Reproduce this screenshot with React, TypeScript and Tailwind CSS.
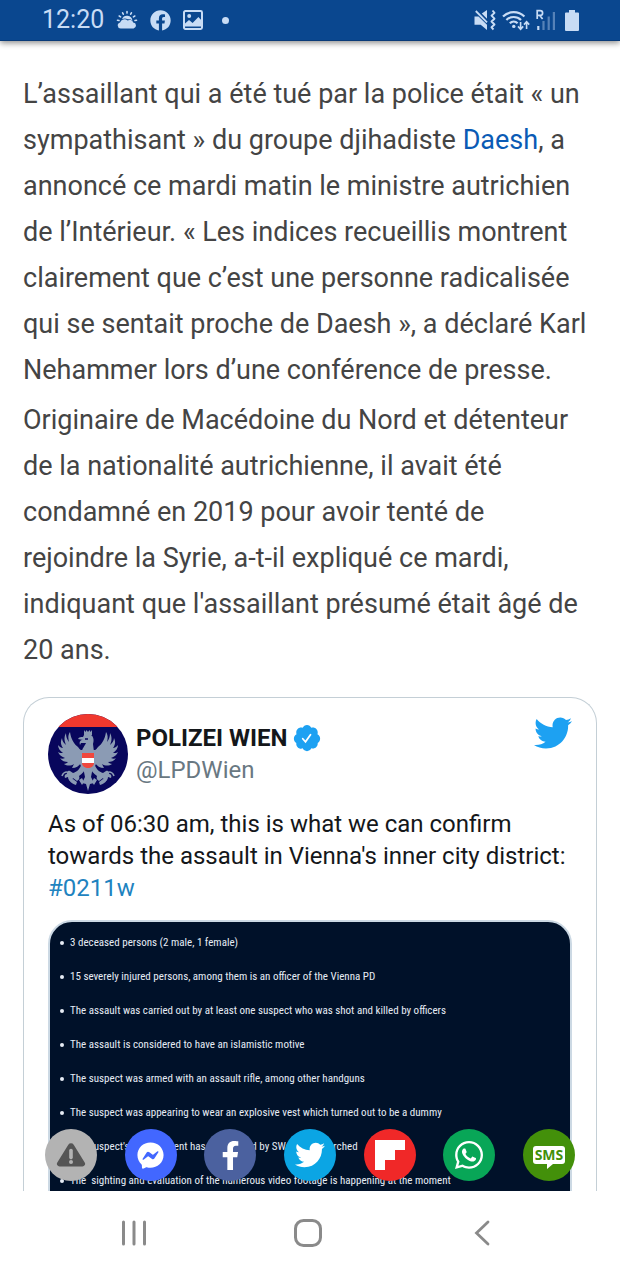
import React from 'react';
import { FaFacebook, FaFacebookF, FaFacebookMessenger, FaTwitter, FaWhatsapp } from 'react-icons/fa';

interface IShareLink {
    name: string;
    className: string;
    icon: React.ReactNode;
}

const facts: string[] = [
    "3 deceased persons (2 male, 1 female)",
    "15 severely injured persons, among them is an officer of the Vienna PD",
    "The assault was carried out by at least one suspect who was shot and killed by officers",
    "The assault is considered to have an islamistic motive",
    "The suspect was armed with an assault rifle, among other handguns",
    "The suspect was appearing to wear an explosive vest which turned out to be a dummy",
    "The suspect's appartement has been found by SWAT and searched",
    "The \u00a0sighting and evaluation of the numerous video footage is happening at the moment",
];

const shareLinks: IShareLink[] = [
    {
        name: "Signaler",
        className: "bg-[#b3b3b3]",
        icon: (
            <svg width="30" height="24" viewBox="0 0 30 24">
                <path d="M12.3 1.8a3.2 3.2 0 0 1 5.4 0l11 17.6a2.6 2.6 0 0 1-2.2 4H3.5a2.6 2.6 0 0 1-2.2-4z" fill="#555" />
                <path d="M15 7.6v7" stroke="#b3b3b3" strokeWidth="3.6" strokeLinecap="round" />
                <circle cx="15" cy="19" r="2" fill="#b3b3b3" />
            </svg>
        ),
    },
    { name: "Messenger", className: "bg-[#4267ff]", icon: <FaFacebookMessenger size={27} /> },
    { name: "Facebook", className: "bg-[#4b619f]", icon: <FaFacebookF size={29} /> },
    { name: "Twitter", className: "bg-[#0ba5e4]", icon: <FaTwitter size={30} /> },
    {
        name: "Flipboard",
        className: "bg-[#f02828]",
        icon: (
            <svg width="30" height="30" viewBox="0 0 30 30" fill="currentColor">
                <path d="M0 0h30v10H20v10H10v10H0z" />
            </svg>
        ),
    },
    { name: "WhatsApp", className: "bg-[#08a657]", icon: <FaWhatsapp size={32} /> },
];

function WeatherIcon() {
    return (
        <svg width="22" height="20" viewBox="0 0 22 20" fill="currentColor">
            <path d="M4.6 18.5a3.1 3.1 0 0 1-.5-6.1 4.6 4.6 0 0 1 7.4-1.9 3.9 3.9 0 0 1 5.7 1.9 3.1 3.1 0 0 1 .4 6.1z" />
            <path d="M6 9.3a5.4 5.4 0 0 1 10.4 1.2 5.6 5.6 0 0 0-4.6-1.2A5.6 5.6 0 0 0 6 9.3z" />
            <path
                d="M11 1.5v1.6M6.6 2.8l.7 1.4M15.4 2.8l-.7 1.4M3.2 6l1.4.9M18.8 6l-1.4.9M1.5 10.2l1.5.3M20.5 10.2l-1.5.3"
                stroke="currentColor"
                strokeWidth="1.6"
                strokeLinecap="round"
            />
        </svg>
    );
}

function PictureIcon() {
    return (
        <svg width="20" height="20" viewBox="0 0 20 20">
            <rect x="1" y="1" width="18" height="18" rx="1.4" fill="none" stroke="currentColor" strokeWidth="2" />
            <circle cx="6.2" cy="6" r="2" fill="currentColor" />
            <path d="M2 16.5v-3l4-3.6 3.6 3L15.4 7l3.2 3.4v6.1z" fill="currentColor" />
        </svg>
    );
}

function MuteIcon() {
    return (
        <svg width="22" height="22" viewBox="0 0 22 22">
            <path d="M.5 7.5h4L13 15.8V21l-6.3-5.2H.5zM7.8 4.6 13 1v8.8z" fill="currentColor" />
            <path d="M1.8 2 13 13.4" stroke="currentColor" strokeWidth="1.8" />
            <path d="m18.5 1.5 2 2.4-3 2.8 3 3-3 2.8 3 3-3 2.8 2 2.2" fill="none" stroke="currentColor" strokeWidth="1.9" strokeLinejoin="round" />
        </svg>
    );
}

function WifiIcon() {
    return (
        <svg width="28" height="22" viewBox="0 0 28 22" fill="none" stroke="currentColor" strokeWidth="2.2">
            <path d="M1 7.6a15 15 0 0 1 21.4 0" />
            <path d="M4.4 11a10.4 10.4 0 0 1 14.6 0" />
            <path d="M7.8 14.2a5.6 5.6 0 0 1 7.8 0" />
            <circle cx="11.8" cy="17.4" r="1.7" fill="currentColor" stroke="none" />
            <path d="M18.6 13v7M16 17.4l2.6 2.8 2.6-2.8M24.6 20v-7M22 15.6l2.6-2.8 2.6 2.8" strokeWidth="1.6" />
        </svg>
    );
}

function SignalIcon() {
    return (
        <svg width="20" height="22" viewBox="0 0 20 22" fill="currentColor">
            <path d="M1.2 10V1.6h3a2.3 2.3 0 0 1 0 4.8h-3M3.8 6.4 6.6 10" fill="none" stroke="currentColor" strokeWidth="1.7" />
            <path d="M1.2 17h2.2v4H1.2z" />
            <path d="M6.4 12h2.2v9H6.4zM11.6 7.6h2.2V21h-2.2zM16.8 3H19v18h-2.2z" opacity="0.4" />
        </svg>
    );
}

function BatteryIcon() {
    return (
        <svg width="14" height="21" viewBox="0 0 14 21" fill="currentColor">
            <path d="M4 0h6v2.4h3a1 1 0 0 1 1 1V20a1 1 0 0 1-1 1H1a1 1 0 0 1-1-1V3.4a1 1 0 0 1 1-1h3z" />
        </svg>
    );
}

function StatusBar() {
    return (
        <header className="relative z-10 flex h-[41px] shrink-0 items-center justify-between border-b border-[#083a78] bg-[#0a478f] pl-[42px] pr-[41px] text-[#c8dcf5] shadow-[0_2px_6px_rgba(0,0,0,0.45)]">
            <div className="flex items-center">
                <time className="mr-3 text-[25px] leading-7">12:20</time>
                <WeatherIcon />
                <FaFacebook size={21} className="ml-3" />
                <span className="ml-3"><PictureIcon /></span>
                <span className="ml-[19px] size-[7px] rounded-full bg-current" />
            </div>
            <div className="flex items-center">
                <MuteIcon />
                <span className="ml-[6px]"><WifiIcon /></span>
                <span className="ml-[6px]"><SignalIcon /></span>
                <span className="ml-[9px]"><BatteryIcon /></span>
            </div>
        </header>
    );
}

function Avatar() {
    // one half of the eagle, mirrored for the other side
    const half = (
        <>
            <path d="M37 38c-3-1-5-2-7-5-4-3-7-8-8-15-2 3-2 6-1 10-2-3-3-5-3-9-2 4-2 7 0 12-2-2-4-4-4-7-2 4-1 7 1 10-2 0-4-2-5-3 0 3 2 6 5 8-2 0-4 0-5-1 1 3 4 5 7 6-2 1-4 1-5 0 2 3 5 4 8 4-1 1-3 2-4 2 3 2 7 2 10 0l-2 4c4 0 7-2 9-5l5 2z" />
            <path d="M34 49c-2 6-5 9-9 10l-3-2c-2-1-4 1-3 3-2 0-3 2-2 4l3-1c0 3 2 4 4 4l1-3 4 3c2-1 3-3 2-5 3-2 6-5 7-10z" />
            <path d="M21 66c2 3 4 4 7 5l1-3-4-3zM31 66l3 5 2-3-2-4z" />
            <path d="M14 62c1-3 3-4 5-4" fill="none" stroke="#8b9bb4" strokeWidth="1.6" />
        </>
    );
    return (
        <svg className="size-20 shrink-0 rounded-full" viewBox="0 0 80 80" role="img" aria-label="Polizei Wien">
            <path d="M0 0h80v80H0z" fill="#08065c" />
            <path d="M0 0h80v13H0z" fill="#f0382e" />
            <g fill="#8b9bb4">
                {half}
                <g transform="translate(80 0) scale(-1 1)">{half}</g>
                <path d="M36 16l1.5 2 1-2 1.5 2 1.5-2 1 2 1.5-2v5h-8z" />
                <path d="M36 21h7c3 2 3 6 2 9l1 8H34c0-4 3-6 4-9l-5 0-1 2c-1-3 0-5 3-5l-5-1c1-2 3-2 5-2z" />
                <path d="M33 36h14l1 14-4 8-1 5 3 6-4 1-2 7-2-7-4-1 3-6-1-5-4-8z" />
            </g>
            <path d="M37 25h3" stroke="#08065c" strokeWidth="1.4" />
            <path d="M34 39h12v10c0 3-3 5-6 5s-6-2-6-5z" fill="#f0483e" />
            <path d="M34 44h12v5H34z" fill="#fff" />
        </svg>
    );
}

function VerifiedBadge() {
    return (
        <svg width="30" height="30" viewBox="0 0 24 24" role="img" aria-label="Compte certifié">
            <path
                fill="#1da1f2"
                d="M22.5 12.5c0-1.58-.875-2.95-2.148-3.6.154-.435.238-.905.238-1.4 0-2.21-1.71-3.998-3.818-3.998-.47 0-.92.084-1.336.25C14.818 2.415 13.51 1.5 12 1.5s-2.816.917-3.437 2.25c-.415-.165-.866-.25-1.336-.25-2.11 0-3.818 1.79-3.818 4 0 .494.083.964.237 1.4-1.272.65-2.147 2.018-2.147 3.6 0 1.495.782 2.798 1.942 3.486-.02.17-.032.34-.032.514 0 2.21 1.708 4 3.818 4 .47 0 .92-.086 1.335-.25.62 1.334 1.926 2.25 3.437 2.25 1.512 0 2.818-.916 3.437-2.25.415.163.865.248 1.336.248 2.11 0 3.818-1.79 3.818-4 0-.174-.012-.344-.033-.513 1.158-.687 1.943-1.99 1.943-3.484z"
            />
            <path d="m8.6 12.6 2.2 2.4 4-5.6" fill="none" stroke="#fff" strokeWidth="1.4" strokeLinecap="round" />
        </svg>
    );
}

function TweetCard() {
    return (
        <section className="mt-6 rounded-t-[26px] border border-b-0 border-[#c4cfd6] px-6 pt-4">
            <div className="flex items-start">
                <Avatar />
                <div className="ml-2 pt-2">
                    <div className="flex h-8 items-center gap-1">
                        <a href="#lpdwien" className="text-[24px] font-bold leading-8 text-[#14171a]">POLIZEI WIEN</a>
                        <VerifiedBadge />
                    </div>
                    <p className="text-[24px] leading-8 text-[#697882]">@LPDWien</p>
                </div>
                <a href="#tweet" aria-label="Voir sur Twitter" className="ml-auto text-[#1da1f2]">
                    <FaTwitter size={38} />
                </a>
            </div>
            <p className="mt-[14px] text-[24px] leading-8 text-[#14171a]">
                As of 06:30 am, this is what we can confirm towards the assault in Vienna's inner city district:{' '}
                <a href="#0211w" className="text-[#1f83bf]">#0211w</a>
            </p>
            <div className="mt-4 h-[400px] rounded-[24px] border-2 border-[#ccd9e4] bg-[#001129]">
                <ul className="pt-1 pl-[10px] font-['Roboto_Condensed','Liberation_Sans',sans-serif] text-[11px] leading-[34px] text-[#e6ecf5]">
                    {facts.map((fact, index) => (
                        <li key={index} className="flex items-center gap-[6px] whitespace-nowrap">
                            <span className="size-1 rounded-full bg-current" />
                            {fact}
                        </li>
                    ))}
                </ul>
            </div>
        </section>
    );
}

function ShareBar() {
    return (
        <div className="absolute inset-x-0 bottom-[10px] flex justify-between px-[45px] text-white">
            {shareLinks.map((link) => (
                <button key={link.name} aria-label={link.name} className={`flex size-[52px] items-center justify-center rounded-full ${link.className}`}>
                    {link.icon}
                </button>
            ))}
            <button className="flex size-[52px] items-center justify-center rounded-full bg-[#43900a]">
                <span className="relative flex h-[18px] w-8 items-center justify-center rounded-[3px] bg-white font-['Open_Sans',sans-serif] text-[14px] font-bold leading-4 text-[#43900a]">
                    SMS
                    <svg className="absolute left-3 top-full" width="8" height="5" viewBox="0 0 8 5" fill="#fff">
                        <path d="M0 0h8L2 5V0z" />
                    </svg>
                </span>
            </button>
        </div>
    );
}

function NavBar() {
    return (
        <nav className="flex h-[83px] shrink-0 items-center justify-between bg-white pl-[108px] pr-28 text-[#8a8a8a]">
            <button aria-label="Applications récentes" className="flex w-[52px] justify-center">
                <svg width="26" height="26" viewBox="0 0 26 26" stroke="currentColor" strokeWidth="3" strokeLinecap="round">
                    <path d="M2.5 2v22M13 2v22M23.5 2v22" />
                </svg>
            </button>
            <button aria-label="Accueil" className="flex w-[52px] justify-center">
                <svg width="28" height="28" viewBox="0 0 28 28" fill="none" stroke="currentColor" strokeWidth="3">
                    <rect x="1.5" y="1.5" width="25" height="25" rx="8" />
                </svg>
            </button>
            <button aria-label="Retour" className="flex w-[52px] justify-center">
                <svg width="16" height="26" viewBox="0 0 16 26" fill="none" stroke="currentColor" strokeWidth="2.8" strokeLinecap="round">
                    <path d="M14 2 2.5 13 14 24" />
                </svg>
            </button>
        </nav>
    );
}

export default function App() {
    return (
        <div className="flex h-screen flex-col overflow-hidden bg-white font-['Roboto',sans-serif]">
            <StatusBar />
            <main className="relative min-h-0 flex-1 overflow-hidden px-[23px] pt-[30px]">
                <article className="flex flex-col gap-1 pr-1 text-[27px] leading-[46px] text-[#444]">
                    <p>
                        L’assaillant qui a été tué par la police était « un sympathisant » du groupe djihadiste{' '}
                        <a href="#daesh" className="text-[#0a5bb5]">Daesh</a>, a annoncé ce mardi matin le ministre
                        autrichien de l’Intérieur. « Les indices recueillis montrent clairement que c’est une personne
                        radicalisée qui se sentait proche de Daesh », a déclaré Karl Nehammer lors d’une conférence de presse.
                    </p>
                    <p>
                        Originaire de Macédoine du Nord et détenteur de la nationalité autrichienne, il avait été condamné
                        en 2019 pour avoir tenté de rejoindre la Syrie, a-t-il expliqué ce mardi, indiquant que l'assaillant
                        présumé était âgé de 20 ans.
                    </p>
                </article>
                <TweetCard />
                <ShareBar />
            </main>
            <NavBar />
        </div>
    );
}
